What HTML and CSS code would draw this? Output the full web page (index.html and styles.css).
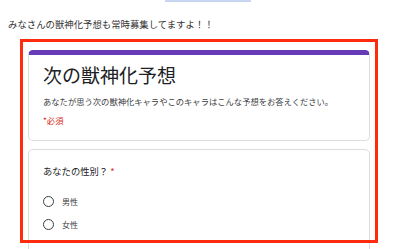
FILE: index.html
```html
<!DOCTYPE html>
<html lang="ja">
<head>
    <meta charset="UTF-8">
    <meta name="viewport" content="width=device-width, initial-scale=1.0">
    <title>次の獣神化予想</title>
    <link rel="stylesheet" href="styles.css">
</head>
<body>
    <div class="top-link"></div>
    <p class="lead">みなさんの獣神化予想も常時募集してますよ！！</p>

    <div class="embed">
        <div class="form">
            <div class="card card-head">
                <h1 class="form-title">次の獣神化予想</h1>
                <p class="form-desc">あなたが思う次の獣神化キャラやこのキャラはこんな予想をお答えください。</p>
                <p class="required-note">*必須</p>
            </div>

            <div class="card question">
                <div class="q-title">あなたの性別？ <span class="star">*</span></div>
                <div class="options">
                    <div class="option">
                        <span class="radio"></span>
                        <span class="opt-label">男性</span>
                    </div>
                    <div class="option">
                        <span class="radio"></span>
                        <span class="opt-label">女性</span>
                    </div>
                </div>
            </div>
        </div>
        <div class="highlight"></div>
    </div>
</body>
</html>
```

FILE: styles.css
```css
* {
    margin: 0;
    padding: 0;
    box-sizing: border-box;
}

body {
    font-family: "Noto Sans CJK JP", "Noto Sans", sans-serif;
    background: #fff;
    color: #333;
    overflow: hidden;
}

.top-link {
    margin-left: 165px;
    width: 86px;
    height: 2px;
    background: #c9d6f1;
}

.lead {
    margin: 15px 0 0 8px;
    font-size: 9.4px;
    line-height: 14px;
    color: #333;
}

.embed {
    position: relative;
    margin-top: 8px;
    padding: 11px 30px 0 28px;
}

.form {
    display: flex;
    flex-direction: column;
    gap: 8px;
}

.card {
    background: #fff;
    border: 1px solid #dadce0;
    border-radius: 5px;
    padding: 0 14px;
}

.card-head {
    border-top: 5px solid #673ab7;
    padding-top: 8px;
    padding-bottom: 14px;
}

.form-title {
    font-size: 19px;
    font-weight: 400;
    line-height: 23px;
    color: #202124;
}

.form-desc {
    margin-top: 9px;
    font-size: 8.3px;
    line-height: 12px;
    color: #3c4043;
}

.required-note {
    margin-top: 7px;
    font-size: 8.3px;
    line-height: 12px;
    color: #d93025;
}

.question {
    padding-top: 15px;
    height: 110px;
}

.q-title {
    font-size: 9.3px;
    line-height: 13px;
    color: #202124;
}

.star {
    color: #d93025;
}

.options {
    margin-top: 12px;
}

.option {
    display: flex;
    align-items: center;
    gap: 8px;
    height: 23px;
}

.radio {
    width: 11px;
    height: 11px;
    border: 1.5px solid #3c4043;
    border-radius: 50%;
}

.opt-label {
    font-size: 8px;
    color: #3c4043;
}

.highlight {
    position: absolute;
    left: 20px;
    top: 0;
    width: 358px;
    height: 204px;
    border: 3px solid #fe2c0e;
    pointer-events: none;
}
```
